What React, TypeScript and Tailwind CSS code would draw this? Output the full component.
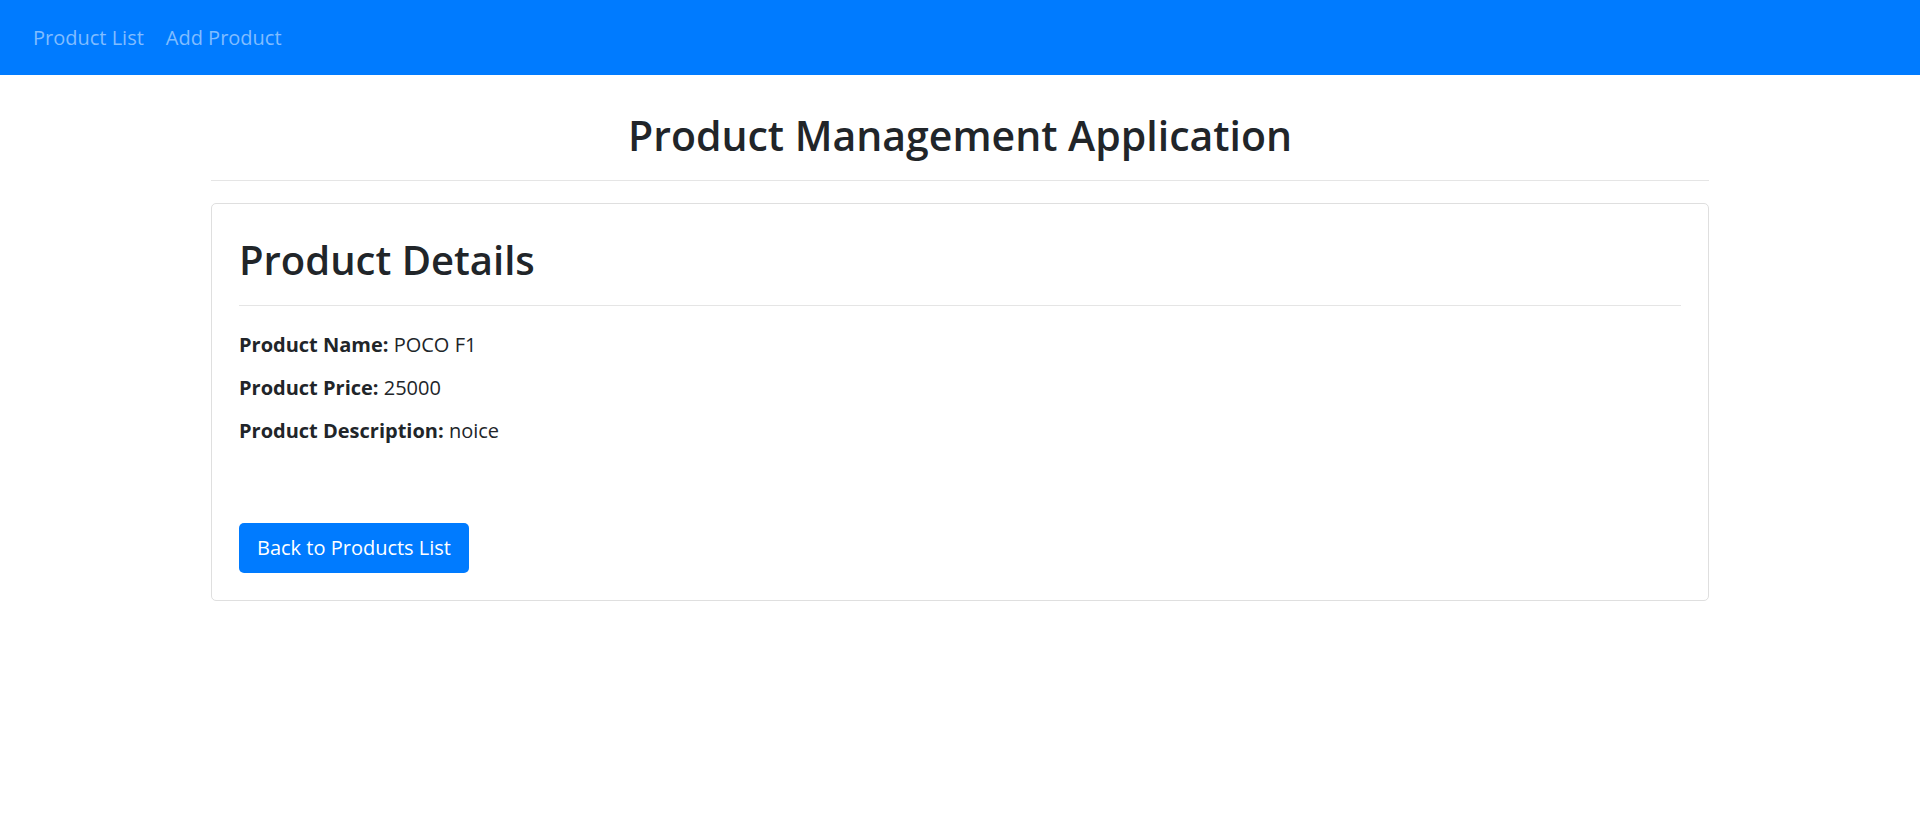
export default function App() {
  const product = { name: 'POCO F1', price: 25000, description: 'noice' };

  return (
    <div className="min-h-screen bg-white text-[#212529] font-['Open_Sans',sans-serif]">
      {/* Navbar */}
      <nav className="h-[75px] bg-[#007bff] flex items-center px-[33px] gap-[22px]">
        <a className="text-[20px] text-[#80bdff] leading-none cursor-pointer">Product List</a>
        <a className="text-[20px] text-[#80bdff] leading-none cursor-pointer">Add Product</a>
      </nav>

      <div className="w-[1498px] mx-auto">
        <h1 className="pt-[32px] text-center text-[41px] leading-[56px] font-semibold">
          Product Management Application
        </h1>
        <hr className="mt-[17px] border-0 border-t border-[#e5e5e5]" />

        {/* Card */}
        <div className="mt-[22px] border border-[#dfdfdf] rounded-[5px] px-[27px] pt-[32px] pb-[27px]">
          <h2 className="text-[40px] leading-[48px] font-semibold">Product Details</h2>
          <hr className="mt-[21px] border-0 border-t border-[#e5e5e5]" />

          <div className="mt-[24px] flex flex-col gap-[13px] text-[20px] leading-[30px]">
            <p>
              <span className="font-bold">Product Name:</span> {product.name}
            </p>
            <p>
              <span className="font-bold">Product Price:</span> {product.price}
            </p>
            <p>
              <span className="font-bold">Product Description:</span> {product.description}
            </p>
          </div>

          <button className="mt-[77px] h-[50px] px-[18px] bg-[#007bff] text-white text-[20px] rounded-[5px]">
            Back to Products List
          </button>
        </div>
      </div>
    </div>
  );
}
